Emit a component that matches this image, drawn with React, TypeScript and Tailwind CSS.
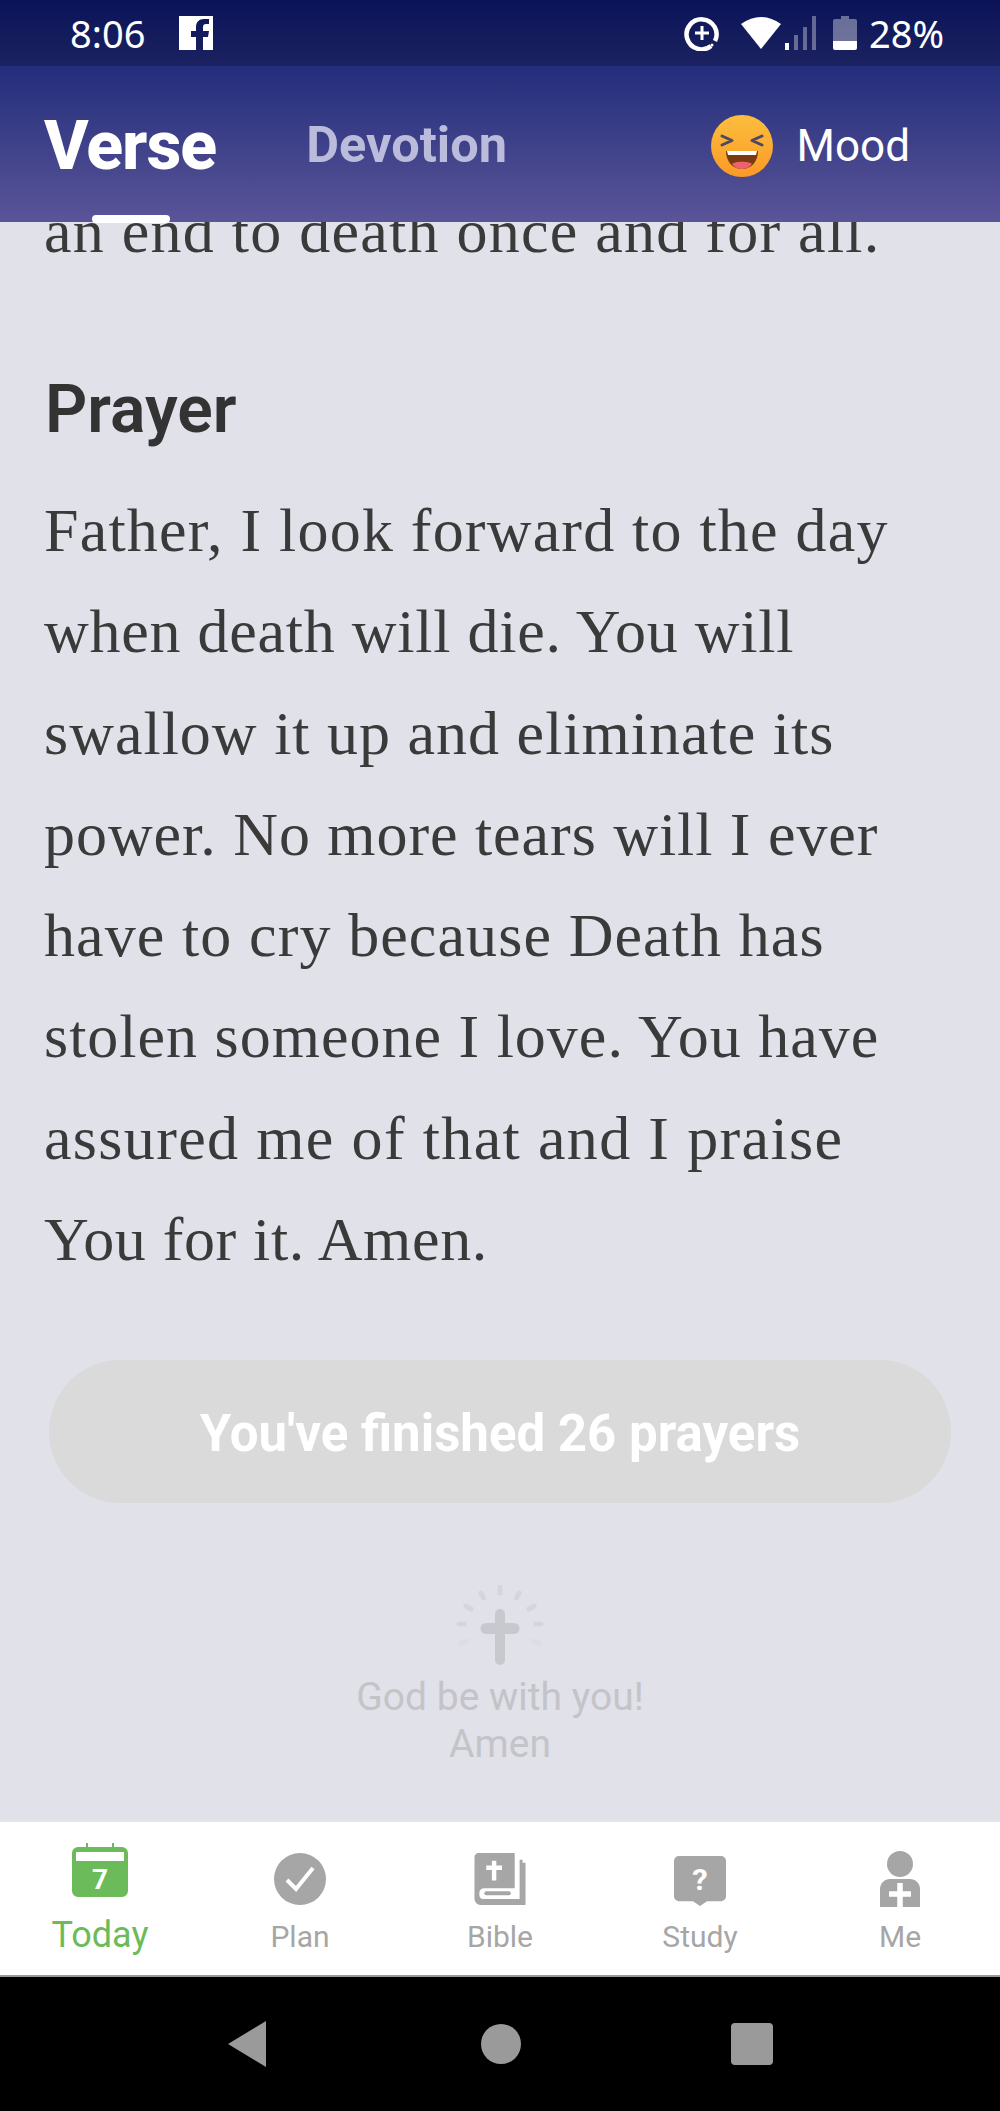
import type { ReactNode } from 'react';

const serif = "font-['Liberation_Serif',serif]";
const roboto = "font-['Roboto',sans-serif]";

const prayerLines = [
  { text: 'Father, I look forward to the day', spacing: 'tracking-[1.2px]' },
  { text: 'when death will die. You will', spacing: 'tracking-[0.75px]' },
  { text: 'swallow it up and eliminate its', spacing: 'tracking-[1px]' },
  { text: 'power. No more tears will I ever', spacing: 'tracking-[0.95px]' },
  { text: 'have to cry because Death has', spacing: 'tracking-[1.1px]' },
  { text: 'stolen someone I love. You have', spacing: 'tracking-[1px]' },
  { text: 'assured me of that and I praise', spacing: 'tracking-[1.35px]' },
  { text: 'You for it. Amen.', spacing: 'tracking-[0.65px]' },
];

function StatusBar() {
  return (
    <div className="h-[66px] shrink-0 flex items-center justify-between pl-[70px] pr-[56px] bg-gradient-to-b from-[#0a1358] to-[#1c2260] text-white text-[38px]">
      <div className="flex items-center gap-[34px]">
        <span className="leading-none">8:06</span>
        <svg width="34" height="34" viewBox="0 0 34 34">
          <path fill="#fff" d="M0 0h34v34H24V21h5l1-6h-6v-4c0-2 1-3 3-3h3V3h-5c-5 0-8 3-8 8v4h-5v6h5v13H0z" />
        </svg>
      </div>
      <div className="flex items-center">
        <svg width="36" height="36" viewBox="0 0 36 36" fill="none" stroke="#fff">
          <path strokeWidth="4.5" d="M27 31A15 15 0 1 1 31 26" />
          <path strokeWidth="3" d="M18 11v14M11 18h14" />
          <circle cx="28" cy="30" r="1.5" fill="#fff" stroke="none" />
        </svg>
        <svg className="ml-[21px]" width="40" height="32" viewBox="0 0 40 32">
          <path fill="#fff" d="M0 7Q20-7 40 7L20 32z" />
        </svg>
        <svg className="ml-[4px]" width="34" height="34" viewBox="0 0 34 34" fill="#fff" fillOpacity="0.35">
          <rect x="0" y="27" width="4" height="7" fillOpacity="1" />
          <rect x="9" y="19" width="4" height="15" />
          <rect x="18" y="11" width="4" height="23" />
          <rect x="27" y="0" width="4" height="34" />
        </svg>
        <svg className="ml-[14px]" width="24" height="34" viewBox="0 0 24 34">
          <path fill="#fff" fillOpacity="0.38" d="M8 0h8v3h6a2 2 0 0 1 2 2v20H0V5a2 2 0 0 1 2-2h6z" />
          <path fill="#fff" d="M0 25h24v7a2 2 0 0 1-2 2H2a2 2 0 0 1-2-2z" />
        </svg>
        <span className="ml-[12px] leading-none">28%</span>
      </div>
    </div>
  );
}

function Header() {
  return (
    <div className={`relative z-10 h-[156px] shrink-0 flex items-center justify-between pl-[44px] pr-[90px] bg-gradient-to-b from-[#232d7b] to-[#5b5498] ${roboto}`}>
      <div className="flex items-center gap-[90px] pt-[3px]">
        <span className="text-[68px] leading-none font-extrabold text-white tracking-[-1px]">Verse</span>
        <span className="text-[50.5px] leading-none font-bold text-[#bbbbdb]">Devotion</span>
      </div>
      <div className="flex items-center gap-[24px] pt-[3px]">
        <svg width="62" height="62" viewBox="0 0 62 62">
          <defs>
            <linearGradient id="face" x1="0" y1="0" x2="0" y2="1">
              <stop offset="0" stopColor="#fcbe3e" />
              <stop offset="1" stopColor="#fb9a26" />
            </linearGradient>
          </defs>
          <circle cx="31" cy="31" r="31" fill="url(#face)" />
          <path d="M11 21l10 4.5-10 4.5M51 21l-10 4.5 10 4.5" fill="none" stroke="#4c4a63" strokeWidth="3" strokeLinecap="round" strokeLinejoin="round" />
          <path d="M15 36h32c0 10-6 18-16 18S15 46 15 36z" fill="#7a3a12" />
          <path d="M16 36h30l-1 4H17z" fill="#fff" />
          <path d="M21 49c3-3 17-3 20 0-2 3-6 5-10 5s-8-2-10-5z" fill="#f0616e" />
        </svg>
        <span className="text-[44px] leading-none text-white">Mood</span>
      </div>
      <div className="absolute left-[92px] bottom-[-1px] h-[8px] w-[78px] rounded-full bg-white" />
    </div>
  );
}

function Bless() {
  return (
    <svg width="88" height="80" viewBox="0 0 88 80">
      <g stroke="#d5d5dc" strokeWidth="5" strokeLinecap="round" fill="none">
        <path d="M44 2v6M25 8l2.500 5M63 8l-2.500 5M10 21l5 3M78 21l-5 3M3 39h5M85 39h-5" />
        <path d="M5 59l6-3M83 59l-6-3" stroke="#dddde4" />
      </g>
      <path d="M44 29v46" stroke="#c8c8cf" strokeWidth="10" strokeLinecap="round" fill="none" />
      <path d="M30 43.500h28" stroke="#c8c8cf" strokeWidth="11" strokeLinecap="round" fill="none" />
    </svg>
  );
}

function Content() {
  return (
    <div className="flex-1 min-h-0 overflow-hidden bg-[#e0e1e9]">
      <div className={`-mt-[29px] pl-[44px] text-[#3a3a3a] ${serif}`}>
        <p className="text-[62px] leading-[76px] tracking-[1.25px] whitespace-nowrap">an end to death once and for all.</p>
      </div>
      <h2 className={`mt-[103px] pl-[45px] text-[66px] leading-[76px] font-semibold text-[#333333] ${roboto}`}>Prayer</h2>
      <div className={`mt-[32px] pl-[44px] text-[62px] leading-[101.3px] text-[#3a3a3a] ${serif}`}>
        {prayerLines.map(line => (
          <p key={line.text} className={`whitespace-nowrap ${line.spacing}`}>{line.text}</p>
        ))}
      </div>
      <div className={`mx-[49px] mt-[70px] h-[143px] w-[902px] rounded-full bg-[#dadada] flex items-center justify-center pt-[3px] ${roboto}`}>
        <span className="text-[51px] leading-none font-bold text-white">You've finished 26 prayers</span>
      </div>
      <div className={`mt-[82px] flex flex-col items-center text-[#c4c4c8] text-[39px] leading-[47px] ${roboto}`}>
        <Bless />
        <span className="mt-[9px]">God be with you!</span>
        <span>Amen</span>
      </div>
    </div>
  );
}

function Tab({ icon, label, active }: { icon: ReactNode; label: string; active?: boolean }) {
  return (
    <div className={`flex-1 flex flex-col items-center ${active ? 'text-[#6cbb5a]' : 'text-[#a6a6a6]'}`}>
      <div className="h-[84px] flex items-end">{icon}</div>
      <span className={active ? 'mt-[7px] text-[36px] leading-[42px]' : 'mt-[10px] text-[30px] leading-[40px]'}>{label}</span>
    </div>
  );
}

function TabBar() {
  return (
    <div className={`h-[156px] shrink-0 flex items-start bg-white border-t border-[#e6e6ea] border-b-2 border-b-[#9a9a9a] pt-[1px] ${roboto}`}>
      <Tab
        active
        label="Today"
        icon={
          <svg className="mb-[10px]" width="56" height="54" viewBox="0 0 56 54">
            <path fill="currentColor" d="M14 0h2v4h24V0h2v4h8a6 6 0 0 1 6 6v38a6 6 0 0 1-6 6H6a6 6 0 0 1-6-6V10a6 6 0 0 1 6-6h8z" />
            <rect x="4" y="9" width="48" height="9" fill="#fff" />
            <text x="28" y="46" textAnchor="middle" fontSize="28" fontWeight="700" fill="#fff" fontFamily="Roboto, sans-serif">7</text>
          </svg>
        }
      />
      <Tab
        label="Plan"
        icon={
          <svg className="mb-[2px]" width="52" height="52" viewBox="0 0 52 52">
            <circle cx="26" cy="26" r="26" fill="currentColor" />
            <path d="M13 27l9 9 17-21" fill="none" stroke="#fff" strokeWidth="4" />
          </svg>
        }
      />
      <Tab
        label="Bible"
        icon={
          <svg className="mb-[2px]" width="52" height="52" viewBox="0 0 52 53">
            <path fill="currentColor" d="M4 0h37v36H10c-3 0-5 2-5 4v3c0 3 2 4 5 4h36V7h3v3h3v43H7c-4 0-7-3-7-7V4c0-2 2-4 4-4z" />
            <path d="M20 8v20M12 15h16" stroke="#fff" strokeWidth="4.5" />
            <rect x="10" y="39" width="27" height="4" rx="2" fill="currentColor" />
          </svg>
        }
      />
      <Tab
        label="Study"
        icon={
          <svg className="mb-[1px]" width="52" height="50" viewBox="0 0 52 52" preserveAspectRatio="none">
            <path fill="currentColor" d="M5 0h42a5 5 0 0 1 5 5v37a5 5 0 0 1-5 5H33l-7 5-7-5H5a5 5 0 0 1-5-5V5a5 5 0 0 1 5-5z" />
            <text x="26" y="35" textAnchor="middle" fontSize="31" fontWeight="700" fill="#fff" fontFamily="Roboto, sans-serif">?</text>
          </svg>
        }
      />
      <Tab
        label="Me"
        icon={
          <svg width="40" height="56" viewBox="0 0 40 56">
            <circle cx="20" cy="13" r="13" fill="currentColor" />
            <path fill="currentColor" d="M0 56V38c0-6 5-10 10-10h20c5 0 10 4 10 10v18z" />
            <path d="M20 32v24M9 43h22" stroke="#fff" strokeWidth="5.5" />
          </svg>
        }
      />
    </div>
  );
}

function NavBar() {
  return (
    <div className="h-[134px] shrink-0 bg-black flex items-center justify-center gap-[210px]">
      <svg className="mr-[4px]" width="40" height="46" viewBox="0 0 40 46">
        <path fill="#9a9a9a" d="M39 0v46L1 23z" />
      </svg>
      <svg width="40" height="40" viewBox="0 0 40 40">
        <circle cx="20" cy="20" r="20" fill="#9a9a9a" />
      </svg>
      <div className="h-[42px] w-[42px] rounded-[4px] bg-[#9a9a9a]" />
    </div>
  );
}

export default function App() {
  return (
    <div className="h-[2111px] w-[1000px] flex flex-col overflow-hidden">
      <StatusBar />
      <Header />
      <Content />
      <TabBar />
      <NavBar />
    </div>
  );
}
